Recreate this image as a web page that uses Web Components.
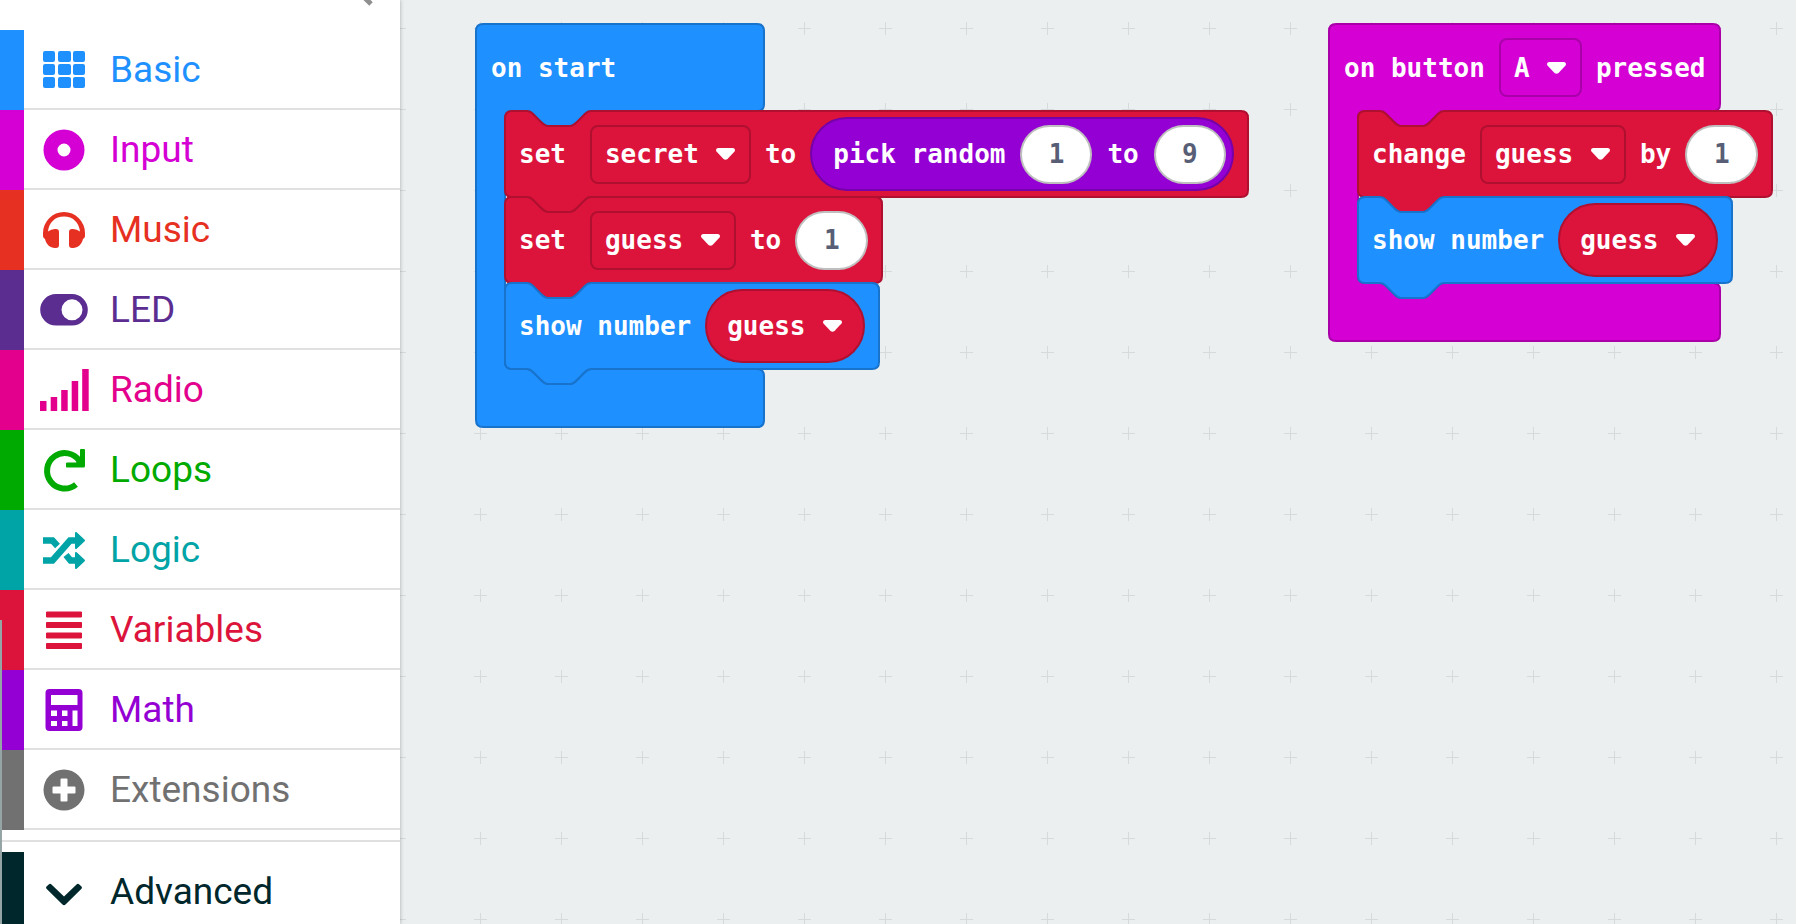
<!DOCTYPE html>
<html lang="en">
<head>
<meta charset="utf-8">
<title>Block editor</title>
<style>
  html, body { height: 100%; margin: 0; }
  body { overflow: hidden; font-family: Roboto, sans-serif; }
</style>
</head>
<body>
<editor-app>
  <tool-box slot="toolbox">
    <tool-category name="Basic" icon="grid" color="#1e90ff"></tool-category>
    <tool-category name="Input" icon="ring" color="#d400d4"></tool-category>
    <tool-category name="Music" icon="headphones" color="#e63022"></tool-category>
    <tool-category name="LED" icon="toggle" color="#5c2d91"></tool-category>
    <tool-category name="Radio" icon="signal" color="#e3008c"></tool-category>
    <tool-category name="Loops" icon="redo" color="#00aa00"></tool-category>
    <tool-category name="Logic" icon="shuffle" color="#00a4a6"></tool-category>
    <tool-category name="Variables" icon="lines" color="#dc143c"></tool-category>
    <tool-category name="Math" icon="calculator" color="#9400d3"></tool-category>
    <tool-category name="Extensions" icon="plus" color="#717171"></tool-category>
    <tool-category slot="more" name="Advanced" icon="chevron" color="#00272b"></tool-category>
  </tool-box>

  <event-block color="#1e90ff" edge="#1873cc" style="left: 76px; top: 24px">
    <block-text slot="head">on start</block-text>
    <statement-block color="#dc143c" edge="#b01030">
      <block-text class="wide">set</block-text>
      <block-select label="variable" value="secret"></block-select>
      <block-text>to</block-text>
      <value-block color="#9400d3" edge="#7600a9">
        <block-text>pick random</block-text>
        <block-number value="1" label="minimum"></block-number>
        <block-text>to</block-text>
        <block-number value="9" label="maximum"></block-number>
      </value-block>
    </statement-block>
    <statement-block color="#dc143c" edge="#b01030">
      <block-text class="wide">set</block-text>
      <block-select label="variable" value="guess"></block-select>
      <block-text>to</block-text>
      <block-number value="1" label="value"></block-number>
    </statement-block>
    <statement-block color="#1e90ff" edge="#1873cc">
      <block-text>show number</block-text>
      <block-select round label="variable" value="guess"></block-select>
    </statement-block>
  </event-block>

  <event-block color="#d400d4" edge="#aa00aa" style="left: 929px; top: 24px">
    <block-text slot="head">on button</block-text>
    <block-select slot="head" label="button" value="A"></block-select>
    <block-text slot="head">pressed</block-text>
    <statement-block color="#dc143c" edge="#b01030">
      <block-text>change</block-text>
      <block-select label="variable" value="guess"></block-select>
      <block-text>by</block-text>
      <block-number value="1" label="amount"></block-number>
    </statement-block>
    <statement-block color="#1e90ff" edge="#1873cc">
      <block-text>show number</block-text>
      <block-select round label="variable" value="guess"></block-select>
    </statement-block>
  </event-block>
</editor-app>

<script>
const ICONS = {
  grid: '<g fill="currentColor"><rect x="3" y="5" width="12" height="11" rx="2"/><rect x="18" y="5" width="13" height="11" rx="2"/><rect x="33" y="5" width="12" height="11" rx="2"/><rect x="3" y="18" width="12" height="11" rx="2"/><rect x="18" y="18" width="13" height="11" rx="2"/><rect x="33" y="18" width="12" height="11" rx="2"/><rect x="3" y="31" width="12" height="11" rx="2"/><rect x="18" y="31" width="13" height="11" rx="2"/><rect x="33" y="31" width="12" height="11" rx="2"/></g>',
  ring: '<circle cx="24" cy="24" r="13.5" fill="none" stroke="currentColor" stroke-width="14"/>',
  headphones: '<path fill="currentColor" d="M3 30V27a21 21 0 0 1 42 0V30q0 2-2 3c-1 5-5 9-10 9h-1q-3 0-3-3V26q0-3 3-3h1q4 0 7 2.500c-1-9-7-15-16-15s-15 6-16 15q3-2.500 7-2.500h1q3 0 3 3V39q0 3-3 3h-1c-5 0-9-4-10-9q-2-1-2-3Z"/>',
  toggle: '<path fill="currentColor" fill-rule="evenodd" d="M16 8H32a15.800 15.800 0 0 1 0 31.600H16A15.800 15.800 0 0 1 16 8ZM32 13.300a10.500 10.500 0 1 0 0 21 10.500 10.500 0 0 0 0-21Z"/>',
  signal: '<path fill="currentColor" d="M0 35h6.500v10H0zM10.700 31h6.500v14h-6.500zM21.200 24h6.500v21h-6.500zM31.700 15h6.500v30h-6.500zM42.200 3h6.500v42h-6.500z"/>',
  redo: '<path fill="none" stroke="currentColor" stroke-width="6" d="M36 38.500A17.700 17.700 0 1 1 39.500 15"/><path fill="currentColor" d="M40 4q0-1 1-1h3q1 0 1 1V20q0 1.500-1.500 1.500H27q-1 0-1-1v-3q0-1 1-1H36L40 14Z"/>',
  shuffle: '<g fill="none" stroke="currentColor" stroke-width="6.500"><path d="M3 34.500H12.500L30 14.500H37M3 14.500H12.500L17.500 20M26 29L30.500 34.500H37"/></g><path fill="currentColor" stroke="currentColor" stroke-width="2" stroke-linejoin="round" d="M36 7L44 14.500 36 22ZM36 27L44 34.500 36 42Z"/>',
  lines: '<path fill="currentColor" stroke="currentColor" stroke-width="1" stroke-linejoin="round" d="M6.500 6h35v5h-35zM6.500 16.500h35v5h-35zM6.500 27h35v5h-35zM6.500 37.500h35v5h-35z"/>',
  calculator: '<path fill="currentColor" fill-rule="evenodd" d="M9.500 3h29q4 0 4 4V41q0 4-4 4h-29q-4 0-4-4V7q0-4 4-4ZM11 9V19H37.500V9ZM11 24.500V30h6V24.500ZM22 24.500V30h5.500V24.500ZM32.500 24.500V40H37.500V24.500ZM11 35V40h6V35ZM22 35V40h5.500V35Z"/>',
  plus: '<path fill="currentColor" fill-rule="evenodd" d="M24 3.500a20.500 20.500 0 1 1 0 41 20.500 20.500 0 0 1 0-41ZM21.500 12.500q-1 0-1 1V20.500H13.500q-1 0-1 1v5q0 1 1 1H20.500V34.500q0 1 1 1h5q1 0 1-1V27.500H34.500q1 0 1-1v-5q0-1-1-1H27.500V13.500q0-1-1-1Z"/>',
  chevron: '<path fill="currentColor" d="M6.500 18.500L9 16.200q1-1 2.200 0L24 28.500 36.800 16.200q1.200-1 2.200 0l2.500 2.300q1 1.200 0 2.300L25.500 36.500q-1.500 1.500-3 0L6.500 20.800q-1-1.100 0-2.300Z"/>'
};

/* Base class: puts a template's markup into an open shadow root. */
class Part extends HTMLElement {
  constructor() {
    super();
    const t = document.createElement('template');
    t.innerHTML = this.markup();
    this.attachShadow({ mode: 'open' }).append(t.content.cloneNode(true));
  }
  $(selector) { return this.shadowRoot.querySelector(selector); }
}

class EditorApp extends Part {
  markup() {
    return `<style>
      :host { display: flex; height: 100vh; overflow: hidden; }
      aside { flex: 0 0 400px; position: relative; z-index: 1; background: #fff; box-shadow: 0 0 4px rgba(0,0,0,.3); }
      main { flex: 1; min-width: 0; position: relative; background: #ebeff0; overflow: hidden; }
      .dots { position: absolute; inset: 0; width: 100%; height: 100%; }
    </style>
    <aside><slot name="toolbox"></slot></aside>
    <main>
      <svg class="dots" aria-hidden="true">
        <defs><pattern id="cross" width="81" height="81" patternUnits="userSpaceOnUse" x="40" y="-12">
          <path d="M34 40.500h13M40.500 34v13" stroke="#d6dadb" fill="none"/>
        </pattern></defs>
        <rect width="100%" height="100%" fill="url(#cross)"/>
      </svg>
      <slot></slot>
    </main>`;
  }
}

class ToolBox extends Part {
  markup() {
    return `<style>
      :host { display: block; position: relative; height: 100%; overflow: hidden; }
      .search { height: 30px; overflow: hidden; display: flex; justify-content: flex-end; padding-right: 27px; box-sizing: border-box; color: #8f8f8f; }
      .search svg { flex: none; margin-top: -26px; }
      .more { border-top: 2px solid #e0e0e0; margin-top: 10px; padding-top: 10px; }
      .bar { position: absolute; left: 0; top: 620px; bottom: 0; width: 2px; background: #95a5a6; }
    </style>
    <div class="search"><svg width="32" height="32" viewBox="0 0 32 32" aria-hidden="true"><g fill="none" stroke="currentColor" stroke-width="5"><circle cx="13" cy="13" r="10"/><path d="M20 20l10 10"/></g></svg></div>
    <nav><slot></slot><div class="more"><slot name="more"></slot></div></nav>
    <div class="bar"></div>`;
  }
}

class ToolCategory extends Part {
  markup() {
    return `<style>
      :host { display: block; }
      button { all: unset; box-sizing: border-box; display: flex; width: 100%; height: 80px; cursor: pointer; }
      .strip { flex: 0 0 24px; background: currentColor; }
      .row { flex: 1; display: flex; align-items: center; gap: 22px; padding-left: 16px; box-shadow: inset 0 -2px #e0e0e0; }
      svg { flex: none; overflow: visible; }
      .name { font: 37px/48px Roboto, sans-serif; }
    </style>
    <button type="button"><span class="strip"></span><span class="row"><svg width="48" height="48" viewBox="0 0 48 48" aria-hidden="true"></svg><span class="name"></span></span></button>`;
  }
  connectedCallback() {
    this.$('button').style.color = this.getAttribute('color');
    this.$('svg').innerHTML = ICONS[this.getAttribute('icon')];
    this.$('.name').textContent = this.getAttribute('name');
  }
}

const NOTCH = 'c4 0 5 2 7 4l7 7c2 2 4 4 7 4h22c3 0 5-2 7-4l7-7c2-2 3-4 7-4';
const NUB = 'c-4 0-5 2-7 4l-7 7c-2 2-4 4-7 4h-22c-3 0-5-2-7-4l-7-7c-2-2-3-4-7-4';

/* A block whose outline follows the size of its content. */
class Outlined extends Part {
  connectedCallback() {
    this.style.setProperty('--edge', this.getAttribute('edge'));
    this.style.setProperty('--fill', this.getAttribute('color'));
    const path = this.$('.outline path');
    const draw = () => path.setAttribute('d', this.outline());
    new ResizeObserver(draw).observe(this);
  }
}
const OUTLINE_CSS = `
  .outline { position: absolute; left: 0; top: 0; width: 100%; height: 100%; overflow: visible; z-index: -1; }
  .outline path { fill: var(--fill); stroke: var(--edge); stroke-width: 2px; }`;
const OUTLINE = '<svg class="outline" aria-hidden="true"><path/></svg>';

class EventBlock extends Outlined {
  markup() {
    return `<style>
      :host { position: absolute; z-index: 0; display: block; width: max-content; }
      ${OUTLINE_CSS}
      header { display: flex; align-items: center; gap: 14px; box-sizing: border-box; width: max-content; min-width: 288px; height: 87px; padding: 0 15px; }
      .body { padding: 0 0 58px 29px; }
    </style>${OUTLINE}
    <header><slot name="head"></slot></header>
    <div class="body"><slot></slot></div>`;
  }
  outline() {
    const head = this.$('header');
    const w = head.offsetWidth, top = head.offsetHeight, h = this.offsetHeight, low = h - 58;
    return `M0 7q0-7 7-7H${w - 7}q7 0 7 7V${top - 7}q0 7-7 7H115${NUB}H36q-7 0-7 7V${low - 7}q0 7 7 7H51${NOTCH}H${w - 7}q7 0 7 7V${h - 7}q0 7-7 7H7q-7 0-7-7Z`;
  }
}

class StatementBlock extends Outlined {
  markup() {
    return `<style>
      :host { position: relative; z-index: 0; display: flex; align-items: center; gap: 14px; box-sizing: border-box; width: max-content; height: 86px; padding: 0 14px; }
      ${OUTLINE_CSS}
      ::slotted(.wide) { margin-right: 10px; }
    </style>${OUTLINE}<slot></slot>`;
  }
  outline() {
    const w = this.offsetWidth, h = this.offsetHeight;
    return `M0 7q0-7 7-7H22${NOTCH}H${w - 7}q7 0 7 7V${h - 7}q0 7-7 7H86${NUB}H7q-7 0-7-7Z`;
  }
}

class ValueBlock extends Part {
  markup() {
    return `<style>
      :host { display: flex; align-items: center; gap: 15px; box-sizing: border-box; height: 74px; padding: 0 6px 0 21px; border: 2px solid; border-radius: 37px; }
      ::slotted(block-number) { --width: 72px; }
    </style><slot></slot>`;
  }
  connectedCallback() {
    this.style.background = this.getAttribute('color');
    this.style.borderColor = this.getAttribute('edge');
  }
}

class BlockText extends Part {
  markup() {
    return `<style>
      :host { display: block; color: #fff; font: bold 26px/32px "DejaVu Sans Mono", monospace; white-space: pre; }
    </style><slot></slot>`;
  }
}

class BlockSelect extends Part {
  markup() {
    return `<style>
      :host { display: block; position: relative; }
      select { appearance: none; display: block; box-sizing: border-box; height: 59px; margin: 0; padding: 0 50px 0 13px; border: 2px solid var(--edge); border-radius: 8px; background: transparent; color: #fff; font: bold 26px/32px "DejaVu Sans Mono", monospace; outline: none; }
      svg { position: absolute; right: 16px; top: 50%; margin-top: -6px; pointer-events: none; }
      :host([round]) select { height: 74px; padding: 0 57px 0 20px; border-radius: 37px; background: #dc143c; border-color: #b01030; }
      :host([round]) svg { right: 23px; }
    </style>
    <select><option></option></select>
    <svg width="19" height="12" viewBox="0 0 19 12" aria-hidden="true"><path fill="#fff" d="M2 0H17q3 1 1.500 3.500L11.500 11q-2 1.500-4 0L.5 3.500Q-1 1 2 0Z"/></svg>`;
  }
  connectedCallback() {
    this.$('select').setAttribute('aria-label', this.getAttribute('label'));
    this.$('option').textContent = this.getAttribute('value');
  }
}

class BlockNumber extends Part {
  markup() {
    return `<style>
      :host { display: block; }
      input { display: block; box-sizing: border-box; width: var(--width, 73px); height: 59px; margin: 0; padding: 0; border: 2px solid rgba(0,0,0,.25); border-radius: 30px; background: #fff; color: #575e75; text-align: center; font: bold 26px/32px "DejaVu Sans Mono", monospace; outline: none; }
    </style><input type="text" inputmode="numeric">`;
  }
  connectedCallback() {
    const input = this.$('input');
    input.value = this.getAttribute('value');
    input.setAttribute('aria-label', this.getAttribute('label'));
  }
}

customElements.define('editor-app', EditorApp);
customElements.define('tool-box', ToolBox);
customElements.define('tool-category', ToolCategory);
customElements.define('event-block', EventBlock);
customElements.define('statement-block', StatementBlock);
customElements.define('value-block', ValueBlock);
customElements.define('block-text', BlockText);
customElements.define('block-select', BlockSelect);
customElements.define('block-number', BlockNumber);
</script>
</body>
</html>
